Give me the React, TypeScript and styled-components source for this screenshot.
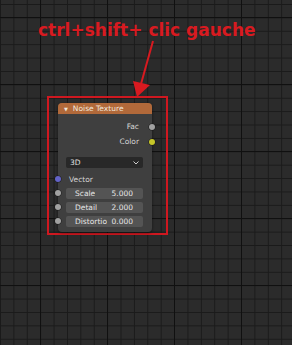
import React from 'react';
import styled, { createGlobalStyle } from 'styled-components';

const GlobalStyle = createGlobalStyle`
    html, body {
        margin: 0;
        padding: 0;
        background-color: #292929;
    }
`;

const Canvas = styled.div`
    position: relative;
    width: 292px;
    height: 345px;
    overflow: hidden;
    box-sizing: border-box;
    padding-top: 18px;
    background-color: #2b2b2b;
    background-image:
        linear-gradient(90deg, #101010 1px, transparent 1px),
        linear-gradient(#101010 1px, transparent 1px),
        linear-gradient(90deg, #1a1a1a 1px, transparent 1px),
        linear-gradient(#1a1a1a 1px, transparent 1px);
    background-size: 67px 67px, 67px 67px, 13.4px 13.4px, 13.4px 13.4px;
    background-position: 40px 0, 0 17px, 0 0, 0 4px;
    font-family: 'DejaVu Sans', 'Liberation Sans', sans-serif;
`;

const Title = styled.div`
    margin-left: 38px;
    height: 24px;
    line-height: 24px;
    font-size: 17px;
    font-weight: bold;
    color: #d81a20;
    white-space: nowrap;
`;

const Arrow = styled.svg`
    position: absolute;
    left: 0;
    top: 0;
    pointer-events: none;
`;

const Frame = styled.div`
    margin-top: 54px;
    margin-left: 47px;
    width: 121px;
    height: 139px;
    box-sizing: border-box;
    border: 2px solid #cf1820;
    padding: 5px 0 0 9px;
`;

const Node = styled.div`
    position: relative;
    width: 94px;
    height: 129px;
    background: #3f3f3f;
    border-radius: 4px;
    box-shadow: 0 1px 3px rgba(0, 0, 0, 0.5);
    font-size: 7.5px;
    color: #d6d6d6;
`;

const Header = styled.div`
    display: flex;
    align-items: center;
    gap: 5px;
    height: 11px;
    padding-left: 6px;
    background: #b1693a;
    border-radius: 4px 4px 0 0;
    color: #f0e6dc;
`;

const Caret = styled.span`
    font-size: 5px;
    color: #f0e6dc;
`;

const Body = styled.div`
    display: flex;
    flex-direction: column;
    padding-top: 5px;
`;

const OutRow = styled.div`
    position: relative;
    display: flex;
    justify-content: flex-end;
    align-items: center;
    height: 15px;
    padding-right: 13px;
`;

const InRow = styled.div`
    position: relative;
    display: flex;
    align-items: center;
    height: 14px;
    padding-left: 11px;
`;

const Socket = styled.span<{ $color: string; $side: 'left' | 'right' }>`
    position: absolute;
    top: 50%;
    ${(p) => (p.$side === 'left' ? 'left: -3px;' : 'right: -3px;')}
    width: 6px;
    height: 6px;
    margin-top: -3px;
    border-radius: 50%;
    background: ${(p) => p.$color};
    box-shadow: 0 0 0 0.5px #1a1a1a;
`;

const Select = styled.div`
    display: flex;
    justify-content: space-between;
    align-items: center;
    margin: 8px 9px 4px 8px;
    height: 11px;
    padding: 0 4px 0 4px;
    background: #282828;
    border-radius: 2px;
    color: #e0e0e0;
`;

const Chevron = styled.svg`
    width: 6px;
    height: 4px;
`;

const Field = styled.div`
    display: flex;
    justify-content: space-between;
    align-items: center;
    width: 77px;
    height: 11px;
    margin-left: -3px;
    padding: 0 10px 0 9px;
    box-sizing: border-box;
    background: #545454;
    border-radius: 2px;
    color: #e6e6e6;
    white-space: nowrap;
    overflow: hidden;
`;

const FieldLabel = styled.span`
    overflow: hidden;
    max-width: 36px;
`;

const inputs = [
    { label: 'Scale', value: '5.000' },
    { label: 'Detail', value: '2.000' },
    { label: 'Distortio', value: '0.000' },
];

export default function App() {
    return (
        <Canvas>
            <GlobalStyle />
            <Title>ctrl+shift+ clic gauche</Title>
            <Arrow width="292" height="345" viewBox="0 0 292 345">
                <line x1="153" y1="41" x2="141" y2="84" stroke="#d81a20" strokeWidth="2" />
                <polygon points="133,81 150,85 137,97" fill="#d81a20" />
            </Arrow>
            <Frame>
                <Node>
                    <Header>
                        <Caret>▼</Caret>
                        Noise Texture
                    </Header>
                    <Body>
                        <OutRow>
                            Fac
                            <Socket $side="right" $color="#a1a1a1" />
                        </OutRow>
                        <OutRow>
                            Color
                            <Socket $side="right" $color="#c7c729" />
                        </OutRow>
                        <Select>
                            3D
                            <Chevron viewBox="0 0 6 4">
                                <polyline points="0.5,0.5 3,3 5.5,0.5" fill="none" stroke="#cfcfcf" strokeWidth="1" />
                            </Chevron>
                        </Select>
                        <InRow>
                            Vector
                            <Socket $side="left" $color="#6363c7" />
                        </InRow>
                        {inputs.map((i) => (
                            <InRow key={i.label}>
                                <Field>
                                    <FieldLabel>{i.label}</FieldLabel>
                                    <span>{i.value}</span>
                                </Field>
                                <Socket $side="left" $color="#a1a1a1" />
                            </InRow>
                        ))}
                    </Body>
                </Node>
            </Frame>
        </Canvas>
    );
}
